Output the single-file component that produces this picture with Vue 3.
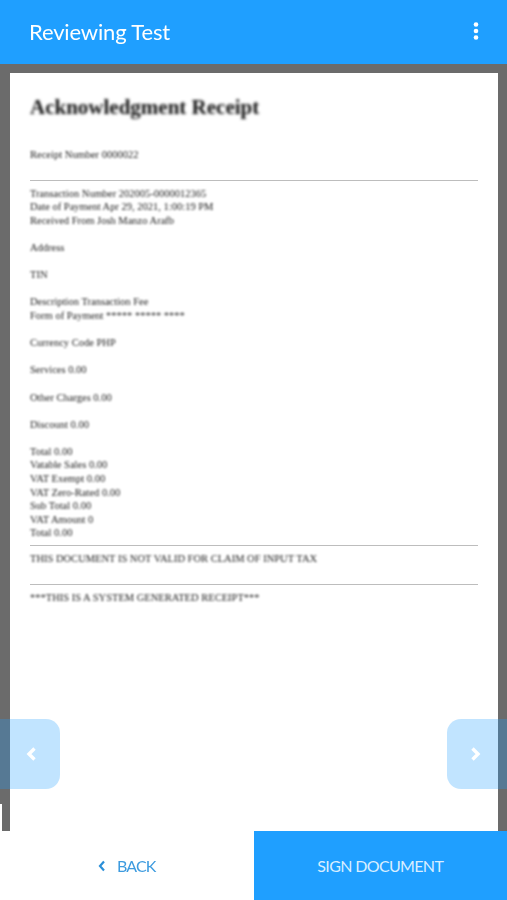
<script setup>
const groups = [
  ['Transaction Number 202005-0000012365', 'Date of Payment Apr 29, 2021, 1:00:19 PM', 'Received From Josh Manzo Arafb'],
  ['Address'],
  ['TIN'],
  ['Description Transaction Fee', 'Form of Payment ***** ***** ****'],
  ['Currency Code PHP'],
  ['Services 0.00'],
  ['Other Charges 0.00'],
  ['Discount 0.00'],
  ['Total 0.00', 'Vatable Sales 0.00', 'VAT Exempt 0.00', 'VAT Zero-Rated 0.00', 'Sub Total 0.00', 'VAT Amount 0', 'Total 0.00'],
]
</script>

<template>
  <div class="app">
    <header class="topbar">
      <h1 class="title">Reviewing Test</h1>
      <svg class="menu" width="8" height="20" viewBox="0 0 8 20" aria-hidden="true">
        <circle cx="4" cy="3.5" r="2.3" />
        <circle cx="4" cy="10" r="2.3" />
        <circle cx="4" cy="16.5" r="2.3" />
      </svg>
    </header>

    <main class="viewer">
      <article class="page">
        <div class="doc">
          <h2 class="doc-title">Acknowledgment Receipt</h2>
          <p class="receipt-no">Receipt Number 0000022</p>
          <hr class="rule" />
          <p v-for="(group, i) in groups" :key="i" class="group">
            <span v-for="line in group" :key="line" class="line">{{ line }}</span>
          </p>
          <hr class="rule rule-tight" />
          <p class="notice">THIS DOCUMENT IS NOT VALID FOR CLAIM OF INPUT TAX</p>
          <hr class="rule rule-lower" />
          <p class="notice">***THIS IS A SYSTEM GENERATED RECEIPT***</p>
        </div>
      </article>

      <span class="edge-mark"></span>

      <button class="pager pager-left" aria-label="Previous page">
        <svg width="14" height="18" viewBox="0 0 14 18"><path d="M11.5 3.5 L6 9 L11.5 14.5" /></svg>
      </button>
      <button class="pager pager-right" aria-label="Next page">
        <svg width="14" height="18" viewBox="0 0 14 18"><path d="M2.5 3.5 L8 9 L2.5 14.5" /></svg>
      </button>
    </main>

    <footer class="actions">
      <button class="action back">
        <svg width="8" height="12" viewBox="0 0 8 12"><path d="M6 1.5 L2 6 L6 10.5" /></svg>
        <span class="back-label">BACK</span>
      </button>
      <button class="action sign">SIGN DOCUMENT</button>
    </footer>
  </div>
</template>

<style scoped>
.app {
  width: 507px;
  height: 900px;
  display: flex;
  flex-direction: column;
  overflow: hidden;
  font-family: "Lato", "Open Sans", sans-serif;
}
.topbar {
  flex: 0 0 64px;
  box-sizing: border-box;
  display: flex;
  align-items: center;
  justify-content: space-between;
  padding: 0 27px 2px 29px;
  background: #1f9fff;
  color: #fff;
}
.title {
  margin: 0;
  font-size: 22px;
  font-weight: 400;
  letter-spacing: -0.15px;
  filter: blur(0.4px);
}
.menu {
  fill: #fff;
  filter: blur(0.4px);
}
.viewer {
  position: relative;
  flex: 1;
  display: flex;
  padding: 9px 9px 0 10px;
  background: #6b6b6b;
  min-height: 0;
}
.page {
  flex: 1;
  background: #fff;
  overflow: hidden;
}
.doc {
  padding: 20px 20px 0;
  font-family: "Liberation Serif", serif;
  font-size: 10.5px;
  line-height: 13.6px;
  color: #222;
}
.doc-title {
  margin: 0;
  font-size: 21px;
  line-height: 28px;
  font-weight: 700;
  color: #111;
  filter: blur(1.4px);
}
.receipt-no {
  margin: 27px 0 0;
  filter: blur(1.2px);
}
.rule {
  height: 1px;
  margin: 18px 0 6px;
  border: 0;
  background: #bdbdbd;
  filter: blur(0.3px);
}
.group {
  margin: 0 0 13.6px;
  filter: blur(1.2px);
}
.line {
  display: block;
}
.rule-tight {
  margin: -9px 0 6px;
}
.rule-lower {
  margin: 19px 0 6px;
}
.notice {
  margin: 0;
  filter: blur(1.1px);
}
.edge-mark {
  position: absolute;
  left: 0;
  top: 740px;
  width: 2px;
  height: 27px;
  background: #fff;
}
.pager {
  position: absolute;
  top: 655px;
  width: 60px;
  height: 70px;
  padding: 0;
  border: 0;
  display: flex;
  align-items: center;
  justify-content: center;
  background: rgba(31, 159, 255, 0.28);
}
.pager svg {
  fill: none;
  stroke: #fff;
  stroke-width: 3.4;
  filter: blur(0.3px);
}
.pager-left {
  left: 0;
  border-radius: 0 14px 14px 0;
}
.pager-right {
  right: 0;
  border-radius: 14px 0 0 14px;
}
.actions {
  flex: 0 0 69px;
  display: flex;
  background: #fff;
}
.action {
  flex: 1;
  border: 0;
  padding: 0;
  display: flex;
  align-items: center;
  justify-content: center;
  font-family: inherit;
  font-size: 16px;
  font-weight: 400;
  letter-spacing: -0.65px;
}
.back {
  gap: 11px;
  background: #fff;
  color: #3d9bdf;
}
.back svg {
  fill: none;
  stroke: #2b8fd8;
  stroke-width: 2.2;
}
.back-label {
  letter-spacing: -0.9px;
  filter: blur(0.3px);
}
.sign {
  background: #1f9fff;
  color: #d9eeff;
}
</style>
